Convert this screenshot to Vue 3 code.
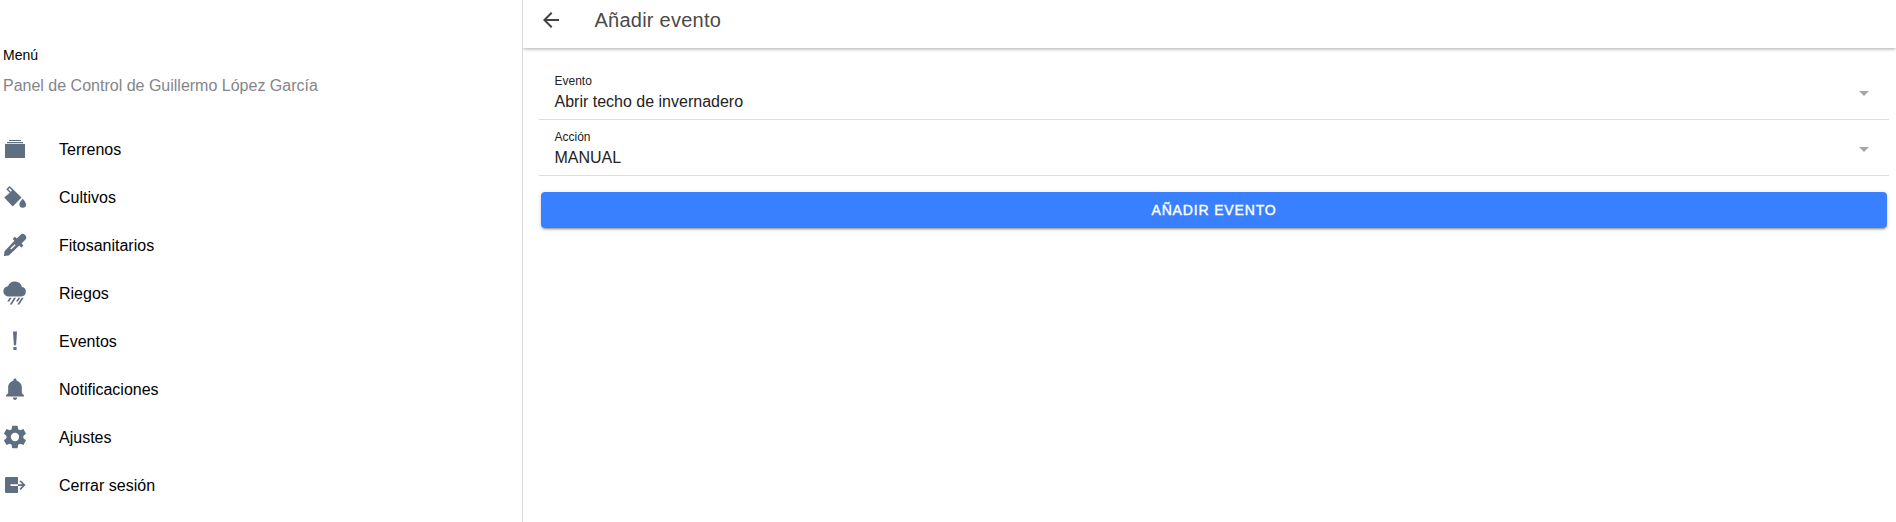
<script setup>
const items = [
  { label: 'Terrenos', d: 'M2 7h20v14H2zM4 5h16v1.200H4zM6 3h12v1H6z' },
  { label: 'Cultivos', d: 'M18.500 12.400 6.600 1 3.300 4.200 6.800 7.700 1.200 12.600l8.500 9 8.800-9.200zM5.300 4.300 6.600 3 9 5.400 7.800 6.700z M19.700 13.800s-3.300 3.400-3.300 5.600a3.300 3.300 0 0 0 6.600 0c0-2.200-3.300-5.600-3.300-5.600z' },
  { label: 'Fitosanitarios', d: 'M22.100 2a3.300 3.300 0 0 0-4.700 0l-3.600 3.400-1.900-1.700-2.200 2.200 1.700 1.800L1.500 18.200.9 23l4.900-.6L16.300 12.600l2.100 2 2-2.100-1.800-2 3.600-3.700a3.400 3.400 0 0 0-.1-4.800zM11.700 11.300l.9.900-4.500 4.300-.9-.9z' },
  { label: 'Riegos', d: 'M19 6A7.400 7.400 0 0 0 5 5.200 5.100 5.100 0 0 0 6 15.500h12.300A4.800 4.800 0 0 0 19 6zM6.500 16.800h2L6.300 20.500h-2zM11 16.800h2l-4.200 6.700h-2zM15.200 16.800h2L15 20.500h-2zM18.600 16.800h2l-4.200 6.700h-2z' },
  { label: 'Eventos', d: 'M10 2.500h4l-.9 13.800h-2.200zM10.400 18h3.200v3h-3.200z' },
  { label: 'Notificaciones', viewBox: '20 20 472 472', d: 'M256 472c22.779 0 41.411-18.719 41.411-49.600h-82.823c0 30.881 18.633 49.600 41.412 49.600zm134.589-132.800V224.8c0-63.44-44.516-117.518-103.53-131.041V79.2c0-17.682-13.457-31.2-31.059-31.2s-31.059 13.518-31.059 31.2v14.559c-59.015 13.523-103.53 67.601-103.53 131.041v114.4L80 380.8v20.8h352v-20.8l-41.411-41.6z' },
  { label: 'Ajustes', viewBox: '1.300 1.300 21.400 21.400', d: 'M19.400 13c0-.3.100-.6.100-1s0-.7-.1-1l2.100-1.700c.2-.1.200-.4.100-.6l-2-3.500c-.1-.2-.4-.3-.6-.2l-2.500 1c-.5-.4-1.100-.7-1.700-1l-.4-2.600c0-.2-.2-.4-.5-.4h-4c-.2 0-.4.200-.5.400L9 5c-.6.300-1.200.6-1.700 1l-2.400-1c-.3-.1-.5 0-.6.200l-2 3.500c-.2.200-.1.500.100.600L4.500 11c0 .3-.1.700-.1 1s0 .7.100 1l-2.100 1.700c-.2.100-.3.400-.1.600l2 3.500c.1.200.3.300.6.200l2.400-1c.5.400 1.100.7 1.700 1l.4 2.600c0 .2.200.4.500.4h4c.2 0 .4-.2.500-.4l.4-2.600c.6-.3 1.200-.6 1.700-1l2.500 1c.2.100.5 0 .6-.2l2-3.500c.1-.2.100-.5-.1-.6zM12 15.700a3.700 3.700 0 1 1 0-7.400 3.700 3.700 0 0 1 0 7.400z' },
  { label: 'Cerrar sesión', d: 'M2 5a1 1 0 0 1 1-1h11a1 1 0 0 1 1 1v6.200H7.500v1.800H15V19a1 1 0 0 1-1 1H3a1 1 0 0 1-1-1zM15 11.200h4.300L16.500 8.400l1.200-1.200L22.500 12.100l-4.800 4.900-1.200-1.200 2.800-2.800H15z' },
]
const fields = [
  { label: 'Evento', value: 'Abrir techo de invernadero' },
  { label: 'Acción', value: 'MANUAL' },
]
</script>

<template>
  <div class="app">
    <aside class="sidebar">
      <div class="menu-title">Menú</div>
      <div class="owner">Panel de Control de Guillermo López García</div>
      <nav>
        <a v-for="item in items" :key="item.label" class="menu-item">
          <svg class="icon" :viewBox="item.viewBox || '0 0 24 24'"><path fill-rule="evenodd" :d="item.d" /></svg>
          <span>{{ item.label }}</span>
        </a>
      </nav>
    </aside>
    <main class="page">
      <header class="toolbar">
        <svg class="back" viewBox="0 0 24 24"><path d="M20 11H7.800l5.600-5.600L12 4l-8 8 8 8 1.400-1.400L7.800 13H20z" /></svg>
        <h1>Añadir evento</h1>
      </header>
      <form class="content">
        <div v-for="field in fields" :key="field.label" class="field">
          <div class="field-text">
            <label>{{ field.label }}</label>
            <div class="value">{{ field.value }}</div>
          </div>
          <span class="caret"></span>
        </div>
        <button type="button">Añadir evento</button>
      </form>
    </main>
  </div>
</template>

<style scoped>
.app {
  display: flex;
  height: 522px;
  overflow: hidden;
  background: #fff;
  color: #000;
  font-family: "Liberation Sans", Arial, sans-serif;
}
.sidebar {
  box-sizing: border-box;
  width: 523px;
  flex: none;
  padding: 45px 0 0 3px;
  border-right: 1px solid #dadada;
}
.menu-title { font-size: 14px; line-height: 20px; }
.owner { margin-top: 11px; font-size: 16px; line-height: 20px; color: #84858b; }
nav { margin-top: 30px; }
.menu-item { display: flex; align-items: center; gap: 32px; height: 48px; font-size: 16px; }
.icon { width: 24px; height: 24px; margin-bottom: 2px; fill: #5f6e80; }
.page { flex: 1; min-width: 0; overflow: hidden; }
.toolbar {
  box-sizing: border-box;
  display: flex;
  align-items: center;
  height: 48px;
  padding: 0 0 8px 16px;
  box-shadow: 0 2px 4px -1px rgba(0, 0, 0, .2), 0 1px 3px rgba(0, 0, 0, .16);
}
.back { width: 24px; height: 24px; fill: #424242; }
h1 { margin: 0 0 0 31.500px; font-size: 20px; font-weight: 400; line-height: 24px; letter-spacing: .24px; color: #4a4a4a; }
.content { padding: 16px 7px 0 16px; }
.field {
  box-sizing: border-box;
  display: flex;
  align-items: center;
  height: 56px;
  padding: 0 20px 0 15.500px;
  border-bottom: 1px solid #dedede;
}
.field-text { flex: 1; padding-top: 1px; }
label { display: block; font-size: 12px; line-height: 16px; color: #222; }
.value { margin-top: 3px; font-size: 16px; line-height: 20px; color: #222; }
.caret { margin-top: 3px; border: 5px solid transparent; border-top-color: #a6a6a6; border-bottom: 0; }
button {
  display: block;
  width: calc(100% - 4px);
  height: 36px;
  margin: 16px 2px 0;
  padding: 0;
  border: 0;
  border-radius: 4px;
  background: #3880ff;
  color: #fff;
  font: 500 14px/36px "Liberation Sans", Arial, sans-serif;
  letter-spacing: .84px;
  text-transform: uppercase;
  -webkit-text-stroke: .4px #fff;
  box-shadow: 0 3px 1px -2px rgba(0, 0, 0, .2), 0 2px 2px 0 rgba(0, 0, 0, .14), 0 1px 5px 0 rgba(0, 0, 0, .12);
}
</style>
